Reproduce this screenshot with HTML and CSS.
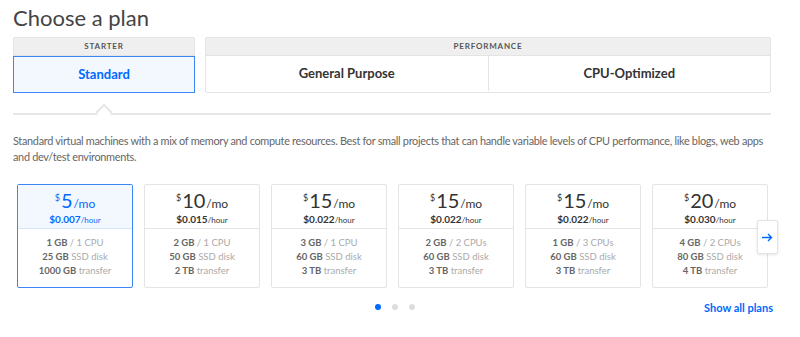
FILE: index.html
```html
<!DOCTYPE html>
<html lang="en">
<head>
  <meta charset="UTF-8">
  <title>Choose a plan</title>
  <link rel="stylesheet" href="styles.css">
</head>
<body>
  <div class="page">
    <h1 class="title">Choose a plan</h1>

    <!-- plan families -->
    <div class="tabs">
      <div class="group starter">
        <div class="group-head">Starter</div>
        <div class="group-body">
          <div class="tab active">Standard</div>
        </div>
      </div>
      <div class="group perf">
        <div class="group-head">Performance</div>
        <div class="group-body">
          <div class="tab">General Purpose</div>
          <div class="tab">CPU-Optimized</div>
        </div>
      </div>
    </div>

    <div class="rule"><span class="notch"></span></div>

    <p class="desc">Standard virtual machines with a mix of memory and compute resources. Best for small projects that can handle variable levels of CPU performance, like blogs, web apps and dev/test environments.</p>

    <!-- sizes -->
    <div class="carousel">
      <div class="cards">
        <div class="card selected">
          <div class="card-head">
            <div class="price"><span class="cur">$</span><span class="amt">5</span><span class="per">/mo</span></div>
            <div class="hourly"><b>$0.007</b>/hour</div>
          </div>
          <div class="card-body">
            <div><b>1 GB</b> / 1 CPU</div>
            <div><b>25 GB</b> SSD disk</div>
            <div><b>1000 GB</b> transfer</div>
          </div>
        </div>
        <div class="card">
          <div class="card-head">
            <div class="price"><span class="cur">$</span><span class="amt">10</span><span class="per">/mo</span></div>
            <div class="hourly"><b>$0.015</b>/hour</div>
          </div>
          <div class="card-body">
            <div><b>2 GB</b> / 1 CPU</div>
            <div><b>50 GB</b> SSD disk</div>
            <div><b>2 TB</b> transfer</div>
          </div>
        </div>
        <div class="card">
          <div class="card-head">
            <div class="price"><span class="cur">$</span><span class="amt">15</span><span class="per">/mo</span></div>
            <div class="hourly"><b>$0.022</b>/hour</div>
          </div>
          <div class="card-body">
            <div><b>3 GB</b> / 1 CPU</div>
            <div><b>60 GB</b> SSD disk</div>
            <div><b>3 TB</b> transfer</div>
          </div>
        </div>
        <div class="card">
          <div class="card-head">
            <div class="price"><span class="cur">$</span><span class="amt">15</span><span class="per">/mo</span></div>
            <div class="hourly"><b>$0.022</b>/hour</div>
          </div>
          <div class="card-body">
            <div><b>2 GB</b> / 2 CPUs</div>
            <div><b>60 GB</b> SSD disk</div>
            <div><b>3 TB</b> transfer</div>
          </div>
        </div>
        <div class="card">
          <div class="card-head">
            <div class="price"><span class="cur">$</span><span class="amt">15</span><span class="per">/mo</span></div>
            <div class="hourly"><b>$0.022</b>/hour</div>
          </div>
          <div class="card-body">
            <div><b>1 GB</b> / 3 CPUs</div>
            <div><b>60 GB</b> SSD disk</div>
            <div><b>3 TB</b> transfer</div>
          </div>
        </div>
        <div class="card">
          <div class="card-head">
            <div class="price"><span class="cur">$</span><span class="amt">20</span><span class="per">/mo</span></div>
            <div class="hourly"><b>$0.030</b>/hour</div>
          </div>
          <div class="card-body">
            <div><b>4 GB</b> / 2 CPUs</div>
            <div><b>80 GB</b> SSD disk</div>
            <div><b>4 TB</b> transfer</div>
          </div>
        </div>
      </div>
      <button class="next" aria-label="Next">
        <svg width="11" height="9" viewBox="0 0 11 9"><path d="M0 4.5h9.5M6 1l3.5 3.5L6 8" fill="none" stroke="#0069ff" stroke-width="1.4"/></svg>
      </button>
    </div>

    <div class="footer">
      <div class="dots"><span class="dot on"></span><span class="dot"></span><span class="dot"></span></div>
      <a class="all" href="#">Show all plans</a>
    </div>
  </div>
</body>
</html>
```

FILE: styles.css
```css
body { margin: 0; font-family: Lato, "Open Sans", sans-serif; color: #444; background: #fff; }
.page { width: 758px; padding: 0 13px; }
.title { margin: 0; padding-top: 5px; font-size: 22px; line-height: 26px; font-weight: 400; color: #444; }

.tabs { display: flex; gap: 10px; margin-top: 6px; }
.group { border: 1px solid #e4e4e4; border-radius: 2px; }
.starter { width: 180px; }
.perf { flex: 1; }
.group-head { height: 17px; line-height: 17px; text-align: center; font-size: 8px; font-weight: 700; letter-spacing: 0.8px; text-transform: uppercase; color: #555; background: #efefef; border-bottom: 1px solid #e4e4e4; }
.group-body { display: flex; }
.tab { flex: 1; height: 35px; line-height: 35px; text-align: center; font-size: 13px; font-weight: 700; color: #333; background: #fff; }
.tab + .tab { border-left: 1px solid #e4e4e4; }
.tab.active { color: #0069ff; background: #f3f8ff; margin: 0 -1px -1px; border: 1px solid #3b87f7; }

.rule { position: relative; height: 2px; background: #e6e6e6; margin-top: 20px; }
.notch { position: absolute; left: 85px; top: -7px; width: 10px; height: 10px; background: #fff; border-left: 2px solid #e6e6e6; border-top: 2px solid #e6e6e6; transform: rotate(45deg); }

.desc { margin: 18px 0 0; font-size: 10.9px; line-height: 16px; letter-spacing: -0.3px; color: #666; }

.carousel { position: relative; margin-top: 19px; }
.cards { display: flex; gap: 11px; padding-left: 4px; }
.card { width: 114px; border: 1px solid #e4e4e4; border-radius: 2px; text-align: center; }
.card-head { height: 43px; border-bottom: 1px solid #e4e4e4; }
.price { height: 24px; padding-top: 5px; color: #333; }
.cur { font-size: 9px; vertical-align: 7px; margin-right: 1px; }
.amt { font-size: 20px; font-weight: 400; line-height: 20px; }
.per { font-size: 12px; margin-left: 1px; }
.hourly { font-size: 8px; color: #333; line-height: 11px; }
.hourly b { font-size: 10px; font-weight: 700; }
.card-body { padding: 7px 0 9px; font-size: 9.5px; line-height: 14px; color: #aaa; }
.card-body b { color: #666; font-weight: 700; }
.card.selected { border-color: #3b87f7; }
.card.selected .card-head { background: #f3f8ff; border-bottom-color: #d6e4f7; }
.card.selected .price, .card.selected .hourly { color: #0069ff; }

.next { position: absolute; left: 744px; top: 36px; width: 21px; height: 34px; padding: 0; border: 1px solid #e4e4e4; border-radius: 2px; background: #fff; box-shadow: 0 1px 3px rgba(0,0,0,0.1); display: flex; align-items: center; justify-content: center; }

.footer { position: relative; display: flex; justify-content: center; align-items: center; margin-top: 12px; height: 14px; }
.dots { display: flex; gap: 11px; margin-left: 6px; }
.dot { width: 6px; height: 6px; border-radius: 50%; background: #ddd; }
.dot.on { background: #0069ff; }
.all { position: absolute; right: -2px; font-size: 11px; font-weight: 700; color: #0069ff; text-decoration: none; }
```
